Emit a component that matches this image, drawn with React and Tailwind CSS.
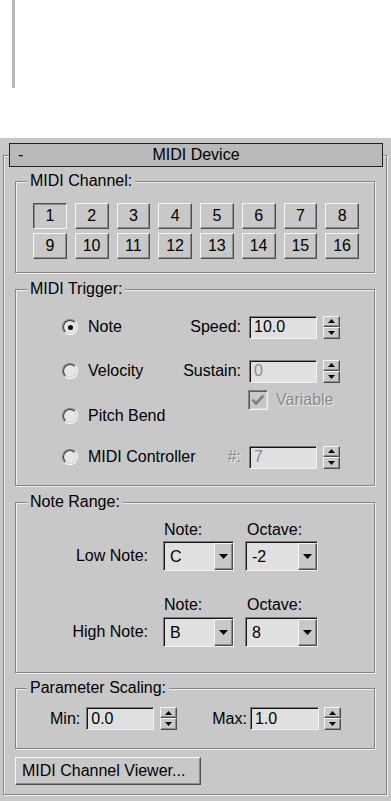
const field =
  "border border-t-[#7c7c7c] border-l-[#7c7c7c] border-r-[#f2f2f2] border-b-[#f2f2f2] shadow-[inset_1px_1px_0_#151515] bg-[#e0e0e0]";
const raised =
  "border border-t-[#f6f6f6] border-l-[#f6f6f6] border-r-[#4e4e4e] border-b-[#4e4e4e] shadow-[inset_-1px_-1px_0_#8c8c8c] bg-[#c8c8c8]";
const pressed =
  "border border-t-[#4e4e4e] border-l-[#4e4e4e] border-r-[#f6f6f6] border-b-[#f6f6f6] shadow-[inset_1px_1px_0_#8c8c8c] bg-[#c8c8c8]";
const group =
  "border border-[#858585] shadow-[1px_1px_0_#efefef,inset_1px_1px_0_#efefef]";
const disabledText = "text-[#8a8a8a] [text-shadow:1px_1px_0_#ececec]";

function Title({ children }) {
  return (
    <div className="-mt-[10px] ml-[11px] w-fit px-[3px] bg-[#c8c8c8] leading-[18px] whitespace-nowrap">
      {children}
    </div>
  );
}

function Spinner() {
  return (
    <div className="flex flex-col w-[17px] h-[23px] flex-none">
      <div className={`${raised} h-[11px] flex items-center justify-center`}>
        <svg width="7" height="4" viewBox="0 0 7 4">
          <polygon points="3.5,0 7,4 0,4" fill="#000" />
        </svg>
      </div>
      <div className={`${raised} h-[12px] flex items-center justify-center`}>
        <svg width="7" height="4" viewBox="0 0 7 4">
          <polygon points="0,0 7,0 3.5,4" fill="#000" />
        </svg>
      </div>
    </div>
  );
}

function TextBox({ value, disabled, w = "w-[68px]" }) {
  return (
    <div
      className={`${field} ${w} h-[23px] flex items-center pl-[4px] flex-none ${
        disabled ? "text-[#8a8a8a]" : ""
      }`}
    >
      {value}
    </div>
  );
}

function Dropdown({ value, w }) {
  return (
    <div className={`${field} ${w} h-[30px] flex pt-[1px] pl-[1px] flex-none`}>
      <div className="flex-1 flex items-center pl-[5px]">{value}</div>
      <div className={`${raised} w-[19px] flex items-center justify-center`}>
        <svg width="9" height="5" viewBox="0 0 9 5">
          <polygon points="0,0 9,0 4.5,5" fill="#000" />
        </svg>
      </div>
    </div>
  );
}

function Radio({ checked, label }) {
  return (
    <div className="h-[24px] flex items-center gap-[10px] whitespace-nowrap">
      <div className="w-[16px] h-[16px] rounded-full border border-t-[#808080] border-l-[#808080] border-r-white border-b-white flex-none">
        <div className="w-full h-full rounded-full border border-t-[#3c3c3c] border-l-[#3c3c3c] border-r-[#d6d6d6] border-b-[#d6d6d6] bg-[#e6e6e6] flex items-center justify-center">
          {checked && <div className="w-[5px] h-[5px] rounded-full bg-black" />}
        </div>
      </div>
      <span>{label}</span>
    </div>
  );
}

function SpinRow({ label, value, disabled, dimLabel, className = "" }) {
  return (
    <div className={`h-[24px] flex items-center justify-end whitespace-nowrap ${className}`}>
      <span className={`mr-[8px] ${dimLabel ? disabledText : ""}`}>{label}</span>
      <TextBox value={value} disabled={disabled} />
      <div className="ml-[6px]">
        <Spinner />
      </div>
    </div>
  );
}

export default function App() {
  const channels = Array.from({ length: 16 }, (_, i) => i + 1);
  return (
    <div className="w-[391px] h-[801px] overflow-hidden bg-white text-[16px] leading-[18px] text-black font-['Liberation_Sans',Arial,sans-serif]">
      <div className="h-[138px]">
        <div className="ml-[12px] w-[3px] h-[88px] bg-[#b9b9b9]" />
      </div>

      <div className="h-[663px] bg-[#c8c8c8] pt-[17px]">
        <div className={`${group} ml-[3px] w-[384px] h-[640px]`}>
          <div className="-mt-[13px] ml-[5px] w-[374px] h-[24px] border border-[#222] bg-[#b9b9b9] grid grid-cols-[1fr_auto_1fr] items-center">
            <span className="pl-[8px]">-</span>
            <span>MIDI Device</span>
            <span />
          </div>

          <div className="ml-[11px] w-[360px]">
            {/* MIDI Channel */}
            <div className={`${group} mt-[14px] pb-[13px]`}>
              <Title>MIDI Channel:</Title>
              <div className="mt-[13px] ml-[17px] w-[326px] grid grid-cols-8 gap-x-[8px] gap-y-[4px]">
                {channels.map((n) => (
                  <div
                    key={n}
                    className={`${n === 1 ? pressed : raised} h-[26px] flex items-center justify-center`}
                  >
                    {n}
                  </div>
                ))}
              </div>
            </div>

            {/* MIDI Trigger */}
            <div className={`${group} mt-[16px] pb-[16px]`}>
              <Title>MIDI Trigger:</Title>
              <div className="flex pl-[46px] pr-[34px]">
                <div className="w-[120px] flex-none flex flex-col">
                  <div className="mt-[17px]">
                    <Radio checked label="Note" />
                  </div>
                  <div className="mt-[20px]">
                    <Radio label="Velocity" />
                  </div>
                  <div className="mt-[21px]">
                    <Radio label="Pitch Bend" />
                  </div>
                  <div className="mt-[17px]">
                    <Radio label="MIDI Controller" />
                  </div>
                </div>
                <div className="flex-1 flex flex-col">
                  <SpinRow className="mt-[17px]" label="Speed:" value="10.0" />
                  <SpinRow className="mt-[20px]" label="Sustain:" value="0" disabled />
                  <div className="mt-[7px] h-[20px] flex justify-end">
                    <div className="w-[92px] flex items-center">
                      <div className="w-[20px] h-[20px] border border-t-[#808080] border-l-[#808080] border-r-[#f2f2f2] border-b-[#f2f2f2] shadow-[inset_1px_1px_0_#5a5a5a,inset_-1px_-1px_0_#d8d8d8] flex items-center justify-center">
                        <svg width="14" height="12" viewBox="0 0 14 12">
                          <polyline points="1.5,5.5 5,9.5 12.5,1.5" fill="none" stroke="#808080" strokeWidth="2.6" />
                        </svg>
                      </div>
                      <span className={`ml-[8px] ${disabledText}`}>Variable</span>
                    </div>
                  </div>
                  <SpinRow className="mt-[35px]" label="#:" value="7" disabled dimLabel />
                </div>
              </div>
            </div>

            {/* Note Range */}
            <div className={`${group} mt-[16px] pb-[25px]`}>
              <Title>Note Range:</Title>
              <div className="mt-[10px] pl-[148px] flex">
                <span className="w-[83px]">Note:</span>
                <span>Octave:</span>
              </div>
              <div className="mt-[2px] flex items-center">
                <span className="w-[132px] text-right">Low Note:</span>
                <div className="ml-[15px]">
                  <Dropdown value="C" w="w-[71px]" />
                </div>
                <div className="ml-[11px]">
                  <Dropdown value="-2" w="w-[73px]" />
                </div>
              </div>
              <div className="mt-[25px] pl-[148px] flex">
                <span className="w-[83px]">Note:</span>
                <span>Octave:</span>
              </div>
              <div className="mt-[3px] flex items-center">
                <span className="w-[132px] text-right">High Note:</span>
                <div className="ml-[15px]">
                  <Dropdown value="B" w="w-[71px]" />
                </div>
                <div className="ml-[11px]">
                  <Dropdown value="8" w="w-[73px]" />
                </div>
              </div>
            </div>

            {/* Parameter Scaling */}
            <div className={`${group} mt-[15px] pb-[18px]`}>
              <Title>Parameter Scaling:</Title>
              <div className="mt-[10px] pl-[34px] flex items-center">
                <span>Min:</span>
                <div className="ml-[6px]">
                  <TextBox value="0.0" />
                </div>
                <div className="ml-[6px]">
                  <Spinner />
                </div>
                <span className="ml-[35px]">Max:</span>
                <div className="ml-[3px]">
                  <TextBox value="1.0" w="w-[69px]" />
                </div>
                <div className="ml-[5px]">
                  <Spinner />
                </div>
              </div>
            </div>

            <button className={`${raised} mt-[8px] w-[186px] h-[28px] text-left pl-[6px] whitespace-nowrap`}>
              MIDI Channel Viewer...
            </button>
          </div>
        </div>
      </div>
    </div>
  );
}
